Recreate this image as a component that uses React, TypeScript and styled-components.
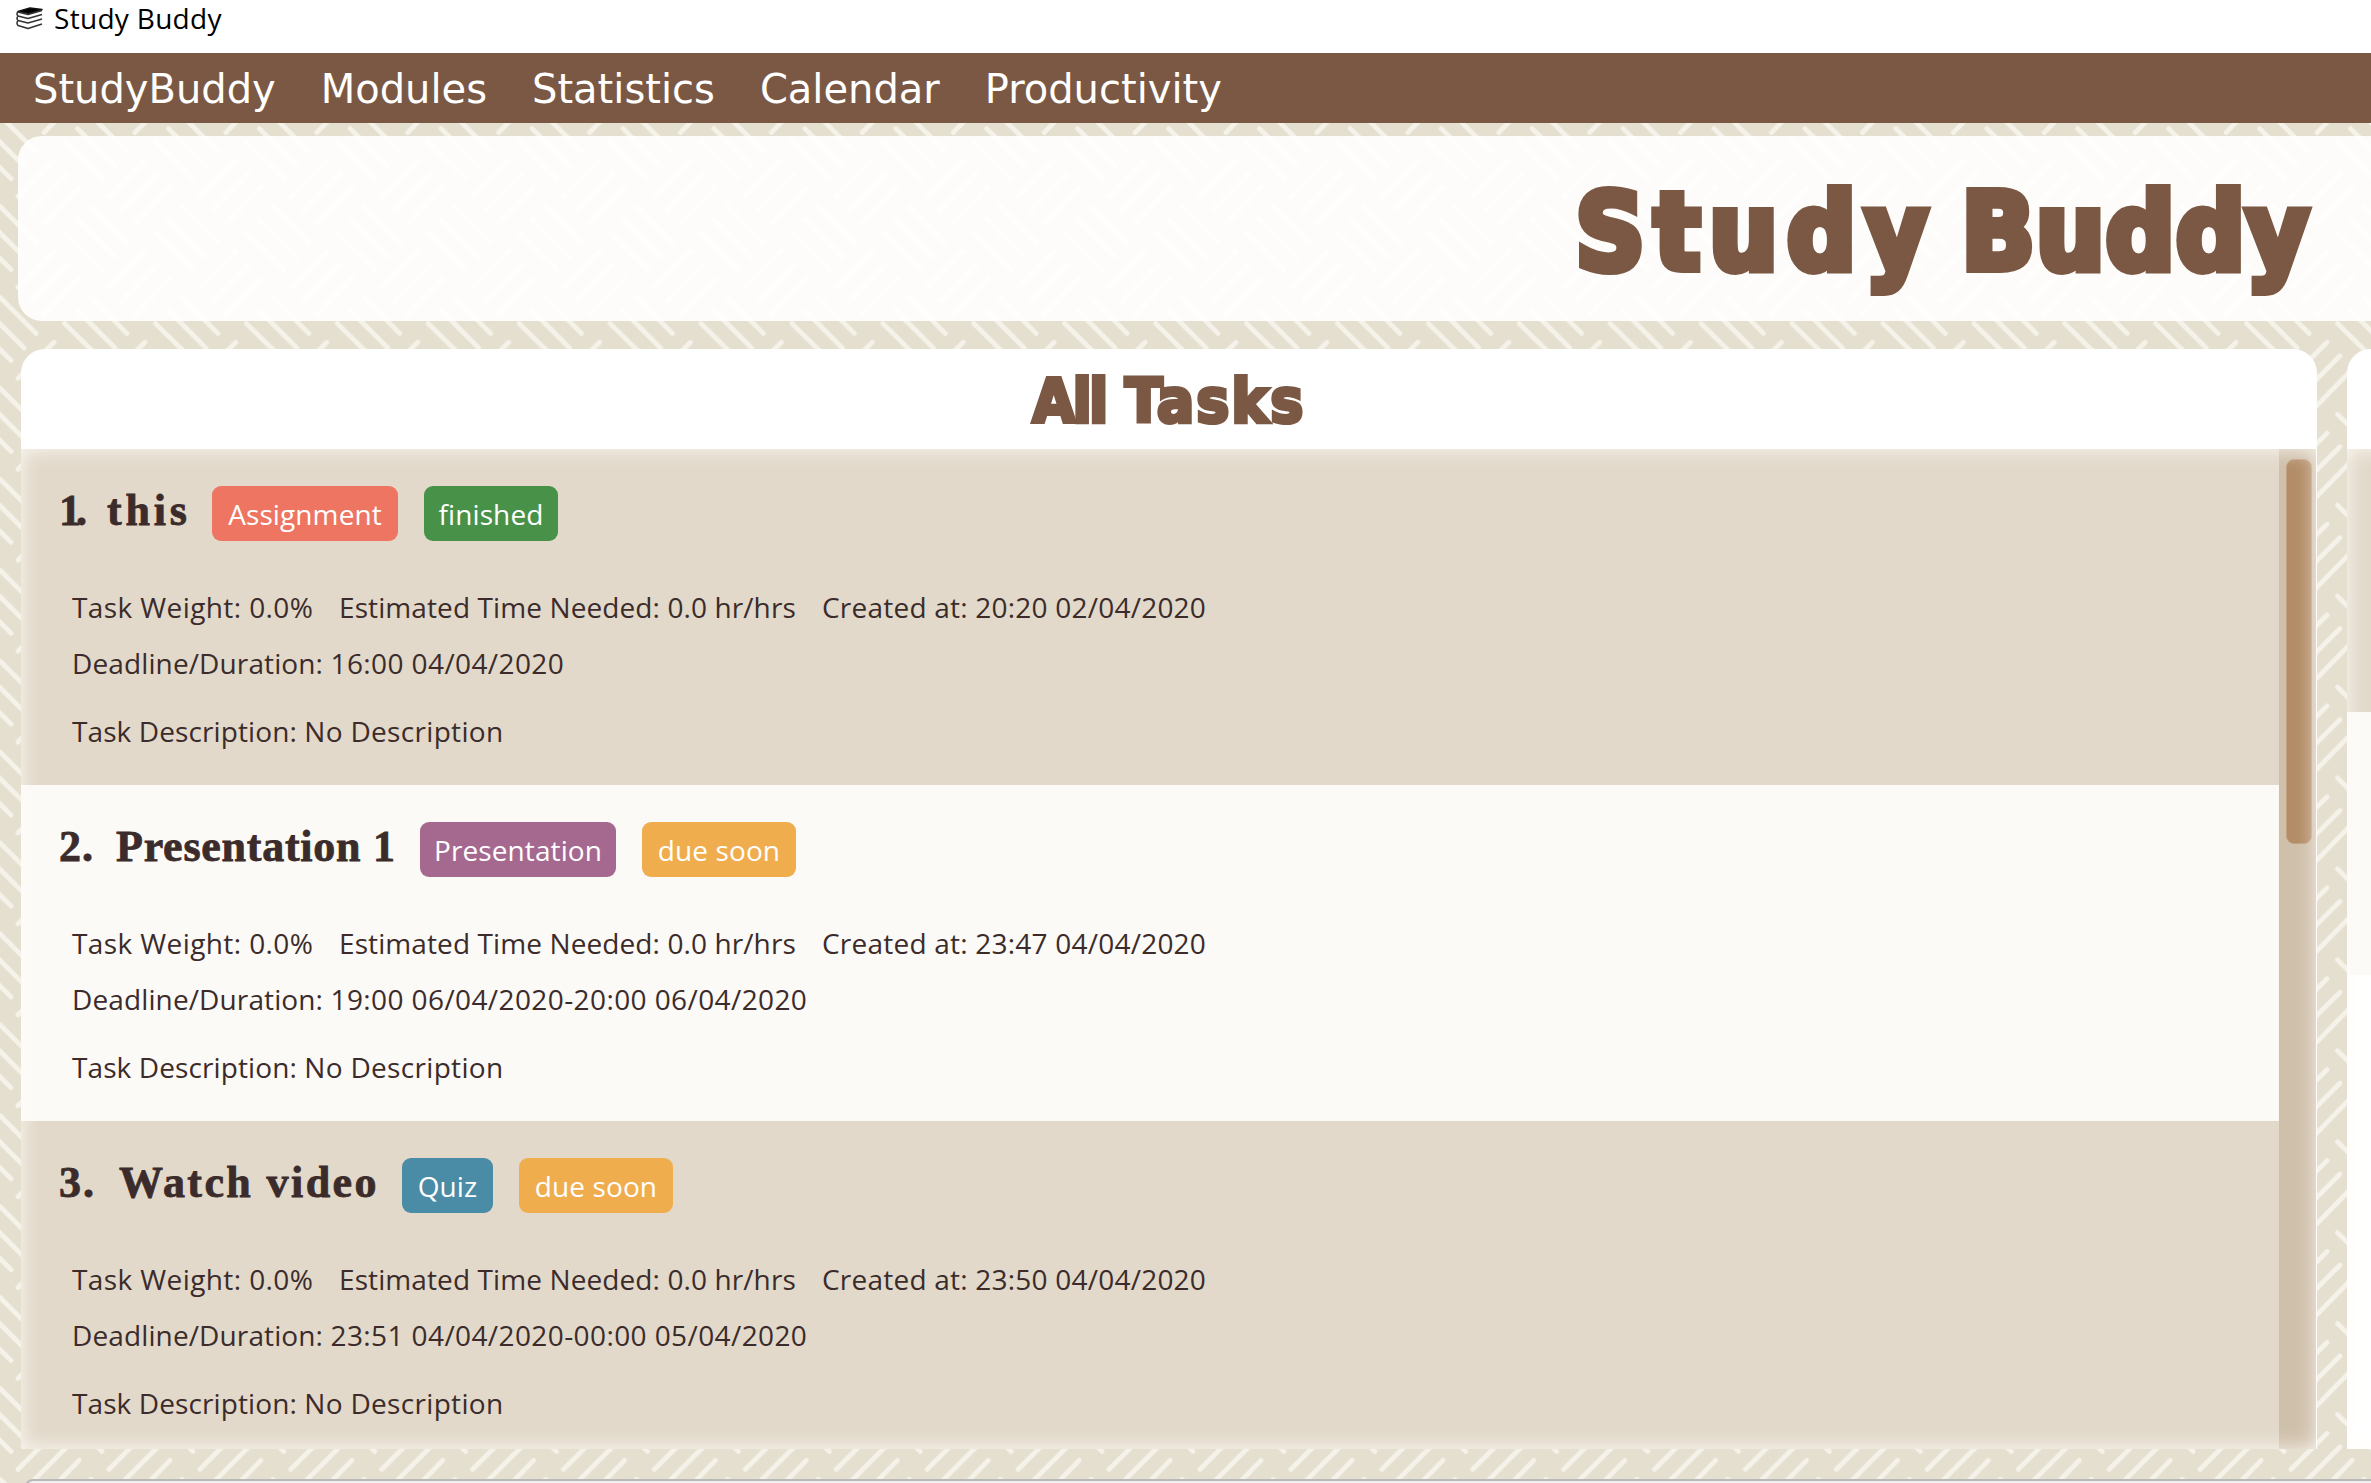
import React from "react";
import styled, { createGlobalStyle } from "styled-components";

const PERIOD = 90.92;

const strokes =
  "M91 83.500L127 119.500M77.500 96.500L115 134M64.500 109.500L102 146.500" +
  "M18 73.500L54 37.500M31 87L67 51M44 100.500L79 64.500";

const weave = `<svg xmlns="http://www.w3.org/2000/svg" width="2400" height="1400"><defs><pattern id="w" width="${PERIOD}" height="${PERIOD}" patternUnits="userSpaceOnUse"><g stroke="#f5f2ea" stroke-width="4.8" stroke-linecap="round" fill="none">${[-2, -1, 0]
  .flatMap((i) =>
    [-2, -1, 0].map((j) => `<path transform="translate(${i * PERIOD} ${j * PERIOD})" d="${strokes}"/>`)
  )
  .join("")}</g></pattern></defs><rect width="2400" height="1400" fill="url(#w)"/></svg>`;

const Global = createGlobalStyle`
  html, body { margin: 0; padding: 0; background: #fff; }
  *, *::before, *::after { box-sizing: border-box; }
`;

const Window = styled.div`
  display: flex;
  flex-direction: column;
  width: 100%;
  height: 100vh;
  min-height: 1483px;
  overflow: hidden;
  font-family: "Open Sans", "Segoe UI", sans-serif;
  font-size: 28px;
  color: #3b2c2b;
`;

const TitleBar = styled.header`
  display: flex;
  flex: none;
  align-items: flex-start;
  height: 53px;
  padding-left: 16px;
  background: #fff;
  color: #000;
  line-height: 36px;
  letter-spacing: 0.3px;

  svg {
    margin: 7px 10px 0 0;
  }
`;

const MenuBar = styled.nav`
  display: flex;
  flex: none;
  gap: 45px;
  height: 70px;
  padding: 1px 0 0 33px;
  background: #7b5844;
  color: #fff;
  font: 40px/70px "DejaVu Sans", Verdana, sans-serif;
  white-space: nowrap;
`;

const Workspace = styled.main`
  display: flex;
  flex: 1;
  flex-direction: column;
  min-height: 0;
  padding-top: 13px;
  overflow: hidden;
  background: #e5dfcf url('data:image/svg+xml,${encodeURIComponent(weave)}') 0 0 no-repeat;
`;

const Banner = styled.section`
  display: flex;
  flex: none;
  align-items: center;
  justify-content: flex-end;
  height: 185px;
  margin-left: 18px;
  padding: 7px 61px 0 0;
  border-radius: 24px 0 0 24px;
  background: rgba(255, 255, 254, 0.9);
`;

const BannerTitle = styled.h1`
  margin: 0;
  color: #7b5844;
  font: bold 107px/1 "DejaVu Sans Condensed", "DejaVu Sans", sans-serif;
  font-stretch: condensed;
  word-spacing: -9px;
  white-space: nowrap;
  -webkit-text-stroke: 8px #7b5844;
`;

const PanelTitle = styled.h2`
  margin: 0;
  color: #7b5844;
  font: bold 61px/1 "DejaVu Sans Condensed", "DejaVu Sans", sans-serif;
  font-stretch: condensed;
  -webkit-text-stroke: 4px #7b5844;
`;

const Word = styled.span<{ $tracking: number }>`
  letter-spacing: ${(p) => p.$tracking}px;
`;

const Columns = styled.div`
  display: flex;
  flex: none;
  gap: 30px;
  width: max-content;
  height: 1100px;
  margin: 28px 0 0 21px;
`;

const Panel = styled.section<{ $width: number }>`
  display: flex;
  flex-direction: column;
  width: ${(p) => p.$width}px;
  overflow: hidden;
  border-radius: 24px 24px 0 0;
  background: #fff;
`;

const PanelHeader = styled.div`
  display: flex;
  flex: none;
  align-items: center;
  justify-content: center;
  height: 100px;
  padding-top: 2px;
`;

const PanelBody = styled.div`
  position: relative;
  display: flex;
  flex: 1;
  min-height: 0;
  overflow: hidden;

  &::after {
    content: "";
    position: absolute;
    inset: 0;
    box-shadow: inset 0 0 20px rgba(255, 253, 250, 0.9);
    pointer-events: none;
  }
`;

const TaskList = styled.div`
  flex: 1;
  min-width: 0;
`;

const TaskRow = styled.article<{ $odd: boolean; $height?: number }>`
  height: ${(p) => p.$height ?? 336}px;
  padding: 37px 0 0 38px;
  background: ${(p) => (p.$odd ? "#e2d9ca" : "#fcfaf6")};
`;

const TaskHeading = styled.div`
  display: flex;
  gap: 26px;
  height: 55px;
`;

const TaskName = styled.h3<{ $width: number; $tracking: number }>`
  display: flex;
  width: ${(p) => p.$width}px;
  margin: 0;
  font: bold 44px/49px "Liberation Serif", serif;
  letter-spacing: ${(p) => p.$tracking}px;
  white-space: nowrap;
  -webkit-text-stroke: 0.8px #3b2c2b;
`;

const TaskNumber = styled.span<{ $width: number; $tracking: number }>`
  flex: none;
  width: ${(p) => p.$width}px;
  letter-spacing: ${(p) => p.$tracking}px;
`;

const Badge = styled.span<{ $color: string; $width: number }>`
  width: ${(p) => p.$width}px;
  border-radius: 9px;
  background: ${(p) => p.$color};
  color: #fff;
  line-height: 56px;
  height: 55px;
  letter-spacing: 0.1px;
  text-align: center;
`;

const Details = styled.div`
  display: flex;
  flex-direction: column;
  margin-top: 38px;
  padding-left: 13px;
`;

const DetailLine = styled.div<{ $gapAbove?: number }>`
  display: flex;
  gap: 26px;
  margin-top: ${(p) => p.$gapAbove ?? 0}px;
  line-height: 56px;
  white-space: nowrap;
`;

const Detail = styled.span<{ $width?: number; $tracking?: number }>`
  width: ${(p) => (p.$width ? `${p.$width}px` : "auto")};
  letter-spacing: ${(p) => p.$tracking ?? 0.3}px;
`;

const ScrollTrack = styled.div`
  flex: none;
  width: 37px;
  margin-right: 1px;
  padding: 10px 4px 0 7px;
  background: #cfc0ab;
`;

const ScrollThumb = styled.div`
  height: 385px;
  border: 1px solid #c3a17f;
  border-radius: 8px;
  background: #b38d68;
`;

const ResultBox = styled.footer`
  flex: none;
  height: 40px;
  margin: 30px 0 0 25px;
  border: 2px solid #b9b9b9;
  border-right: 0;
  border-radius: 8px 0 0 0;
  background: #f0f0f0;
`;

interface BadgeData {
  label: string;
  color: string;
  width: number;
}

interface Task {
  name: string;
  nameWidth: number;
  numberWidth: number;
  numberTracking: number;
  tracking: number;
  badges: BadgeData[];
  created: string;
  deadline: string;
}

const dueSoon: BadgeData = { label: "due soon", color: "#f0ad4e", width: 154 };

const tasks: Task[] = [
  {
    name: "this",
    nameWidth: 127,
    numberWidth: 48,
    numberTracking: -5,
    tracking: 3.8,
    badges: [
      { label: "Assignment", color: "#ed7562", width: 186 },
      { label: "finished", color: "#489148", width: 134 },
    ],
    created: "20:20 02/04/2020",
    deadline: "16:00 04/04/2020",
  },
  {
    name: "Presentation 1",
    nameWidth: 335,
    numberWidth: 57,
    numberTracking: 1,
    tracking: 0.75,
    badges: [{ label: "Presentation", color: "#a56990", width: 196 }, dueSoon],
    created: "23:47 04/04/2020",
    deadline: "19:00 06/04/2020-20:00 06/04/2020",
  },
  {
    name: "Watch video",
    nameWidth: 317,
    numberWidth: 60,
    numberTracking: 2,
    tracking: 2.4,
    badges: [{ label: "Quiz", color: "#4a8ca5", width: 91 }, dueSoon],
    created: "23:50 04/04/2020",
    deadline: "23:51 04/04/2020-00:00 05/04/2020",
  },
];

const BooksIcon = () => (
  <svg width="28" height="24" viewBox="0 0 28 24" fill="none" stroke="#333" strokeWidth="1.5" strokeLinejoin="round">
    <path d="M2 4.500L14 1L26 2.500L13 6.500Z" fill="#000" stroke="#111" />
    <path d="M2 4.500Q0 7 2 9L12 11.500L26 7.500M2 9Q0 11.500 2 13.500L12 16L26 12M2 13.500Q0 16 2 18.500L12 21.500L26 17M2 5L12 7.500L26 3.500" />
  </svg>
);

export default function App() {
  return (
    <Window>
      <Global />
      <TitleBar>
        <BooksIcon />
        <span>Study Buddy</span>
      </TitleBar>
      <MenuBar>
        {["StudyBuddy", "Modules", "Statistics", "Calendar", "Productivity"].map((item) => (
          <span key={item}>{item}</span>
        ))}
      </MenuBar>
      <Workspace>
        <Banner>
          <BannerTitle>
            <Word $tracking={9.2}>Study</Word> <Word $tracking={1.2}>Buddy</Word>
          </BannerTitle>
        </Banner>
        <Columns>
          <Panel $width={2296}>
            <PanelHeader>
              <PanelTitle>
                <Word $tracking={-2.2}>All</Word> <Word $tracking={2.4}>Tasks</Word>
              </PanelTitle>
            </PanelHeader>
            <PanelBody>
              <TaskList>
                {tasks.map((task, index) => (
                  <TaskRow key={task.name} $odd={index % 2 === 0}>
                    <TaskHeading>
                      <TaskName $width={task.nameWidth} $tracking={task.tracking}>
                        <TaskNumber $width={task.numberWidth} $tracking={task.numberTracking}>
                          {index + 1}.
                        </TaskNumber>
                        {task.name}
                      </TaskName>
                      {task.badges.map((badge) => (
                        <Badge key={badge.label} $color={badge.color} $width={badge.width}>
                          {badge.label}
                        </Badge>
                      ))}
                    </TaskHeading>
                    <Details>
                      <DetailLine>
                        <Detail $width={241} $tracking={0.4}>Task Weight: 0.0%</Detail>
                        <Detail $width={457} $tracking={0.1}>Estimated Time Needed: 0.0 hr/hrs</Detail>
                        <Detail $tracking={0.22}>Created at: {task.created}</Detail>
                      </DetailLine>
                      <DetailLine>
                        <Detail>
                          <Word $tracking={0.12}>Deadline/Duration: </Word>
                          <Word $tracking={0.4}>{task.deadline}</Word>
                        </Detail>
                      </DetailLine>
                      <DetailLine $gapAbove={12}>
                        <Detail>
                          <Word $tracking={0.1}>Task Description: </Word>
                          <Word $tracking={0.32}>No Description</Word>
                        </Detail>
                      </DetailLine>
                    </Details>
                  </TaskRow>
                ))}
              </TaskList>
              <ScrollTrack>
                <ScrollThumb />
              </ScrollTrack>
            </PanelBody>
          </Panel>
          <Panel $width={600}>
            <PanelHeader />
            <PanelBody>
              <TaskList>
                <TaskRow $odd $height={263} />
                <TaskRow $odd={false} $height={263} />
              </TaskList>
            </PanelBody>
          </Panel>
        </Columns>
        <ResultBox />
      </Workspace>
    </Window>
  );
}
